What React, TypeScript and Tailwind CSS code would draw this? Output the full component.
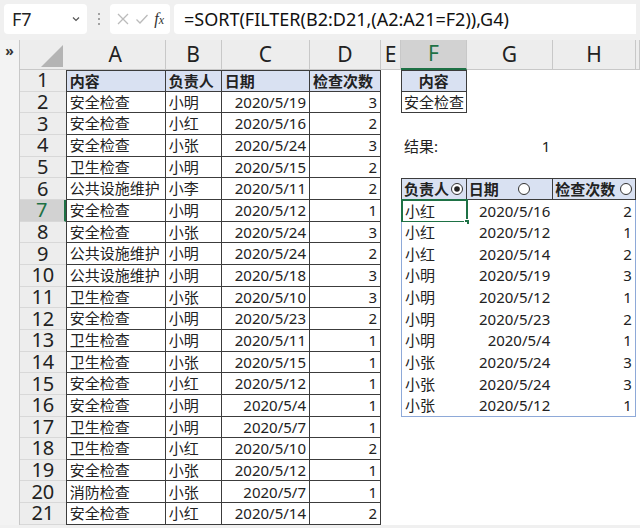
import React from "react";

const FONT = "font-['Noto_Sans','Noto_Sans_CJK_SC',sans-serif]";

const DATA: [string, string, string, number][] = [
  ["安全检查", "小明", "2020/5/19", 3],
  ["安全检查", "小红", "2020/5/16", 2],
  ["安全检查", "小张", "2020/5/24", 3],
  ["卫生检查", "小明", "2020/5/15", 2],
  ["公共设施维护", "小李", "2020/5/11", 2],
  ["安全检查", "小明", "2020/5/12", 1],
  ["安全检查", "小张", "2020/5/24", 3],
  ["公共设施维护", "小明", "2020/5/24", 2],
  ["公共设施维护", "小明", "2020/5/18", 3],
  ["卫生检查", "小张", "2020/5/10", 3],
  ["安全检查", "小明", "2020/5/23", 2],
  ["卫生检查", "小明", "2020/5/11", 1],
  ["卫生检查", "小张", "2020/5/15", 1],
  ["安全检查", "小红", "2020/5/12", 1],
  ["安全检查", "小明", "2020/5/4", 1],
  ["卫生检查", "小明", "2020/5/7", 1],
  ["卫生检查", "小红", "2020/5/10", 2],
  ["安全检查", "小张", "2020/5/12", 1],
  ["消防检查", "小张", "2020/5/7", 1],
  ["安全检查", "小红", "2020/5/14", 2],
];

const RESULT: [string, string, number][] = [
  ["小红", "2020/5/16", 2],
  ["小红", "2020/5/12", 1],
  ["小红", "2020/5/14", 2],
  ["小明", "2020/5/19", 3],
  ["小明", "2020/5/12", 1],
  ["小明", "2020/5/23", 2],
  ["小明", "2020/5/4", 1],
  ["小张", "2020/5/24", 3],
  ["小张", "2020/5/24", 3],
  ["小张", "2020/5/12", 1],
];

const COLS = ["A", "B", "C", "D", "E", "F", "G", "H", ""];

function Radio({ on }: { on?: boolean }) {
  return (
    <svg width="14" height="14" viewBox="0 0 14 14" className="shrink-0">
      <circle cx="7" cy="7" r="5.5" fill="white" stroke="#333" strokeWidth="1" />
      {on && <circle cx="7" cy="7" r="2.8" fill="#222" />}
    </svg>
  );
}

function Toolbar() {
  return (
    <div className="h-[40px] bg-[#f0f0f0] flex items-start pt-[4px] px-[4px] gap-[4px]">
      <div className="w-[83px] h-[30px] bg-white rounded-[4px] flex items-center justify-between pl-[8px] pr-[6px]">
        <span className="text-[18px] text-[#222]">F7</span>
        <svg width="10" height="10" viewBox="0 0 10 10">
          <path d="M2 3.5 L5 6.5 L8 3.5" fill="none" stroke="#555" strokeWidth="1.2" />
        </svg>
      </div>
      <div className="w-[15px] h-[30px] flex items-center justify-center">
        <svg width="4" height="14" viewBox="0 0 4 14">
          <circle cx="2" cy="2" r="1" fill="#888" />
          <circle cx="2" cy="7" r="1" fill="#888" />
          <circle cx="2" cy="12" r="1" fill="#888" />
        </svg>
      </div>
      <div className="w-[60px] h-[30px] bg-white rounded-[4px] flex items-center justify-between px-[6px]">
        <svg width="14" height="14" viewBox="0 0 14 14">
          <path d="M2 2 L12 12 M12 2 L2 12" stroke="#bbb" strokeWidth="1.3" />
        </svg>
        <svg width="14" height="14" viewBox="0 0 14 14">
          <path d="M1.5 7.5 L5 11 L12.5 3" fill="none" stroke="#bbb" strokeWidth="1.3" />
        </svg>
        <span className="font-['Liberation_Serif',serif] italic text-[16px] text-[#333] leading-none">
          f<span className="text-[12px]">x</span>
        </span>
      </div>
      <div className="flex-1 h-[30px] bg-white rounded-l-[4px] flex items-center pl-[10px]">
        <span className="text-[18px] text-[#111]">=SORT(FILTER(B2:D21,(A2:A21=F2)),G4)</span>
      </div>
    </div>
  );
}

export default function App() {
  const cells: React.ReactNode[] = [];

  // header row
  cells.push(
    <div key="corner" className="bg-[#ededed] border-b border-[#c8c8c8] flex items-end justify-end pr-[3px] pb-[2px]">
      <svg width="22" height="22" viewBox="0 0 22 22">
        <path d="M22 0 L22 22 L0 22 Z" fill="#b4b4b4" />
      </svg>
    </div>
  );
  COLS.forEach((c, i) => {
    const sel = c === "F";
    cells.push(
      <div
        key={"h" + i}
        className={
          sel
            ? "bg-[#d2d2d2] border-b-2 border-b-[#1e7145] border-r border-r-[#c8c8c8] flex items-center justify-center text-[21px] text-[#1e7145]"
            : "bg-[#ededed] border-b border-r border-[#c8c8c8] flex items-center justify-center text-[21px] text-[#222]"
        }
      >
        {c}
      </div>
    );
  });

  for (let r = 1; r <= 21; r++) {
    const sel = r === 7;
    cells.push(
      <div
        key={"r" + r}
        className={
          sel
            ? "bg-[#d2d2d2] border-r-2 border-r-[#1e7145] border-b border-b-[#d8d8d8] flex items-center justify-center text-[20px] text-[#1e7145] leading-[18px] overflow-hidden"
            : "bg-[#ededed] border-b border-[#d8d8d8] flex items-center justify-center text-[20px] text-[#222] leading-[18px] overflow-hidden"
        }
      >
        {r}
      </div>
    );

    // A-D
    const row =
      r === 1 ? ["内容", "负责人", "日期", "检查次数"] : DATA[r - 2].map((v) => String(v));
    row.forEach((v, ci) => {
      const head = r === 1;
      const right = !head && ci >= 2;
      let cls =
        "border-r border-b border-[#3c3c3c] flex items-center px-[3px] text-[15px] text-[#222] whitespace-nowrap overflow-hidden";
      if (ci === 0) cls += " border-l";
      if (head) cls += " border-t bg-[#d9e1f2] font-bold";
      else cls += " bg-white";
      if (right) cls += " justify-end";
      cells.push(
        <div key={`c${r}-${ci}`} className={cls}>
          {v}
        </div>
      );
    });

    // E
    cells.push(<div key={`e${r}`} className="bg-white" />);

    // F, G, H
    if (r === 1) {
      cells.push(
        <div key="f1" className="bg-[#d9e1f2] border border-[#3c3c3c] flex items-center justify-center text-[15px] font-bold text-[#222]">
          内容
        </div>
      );
      cells.push(<div key="g1" className="bg-white" />, <div key="hh1" className="bg-white" />);
    } else if (r === 2) {
      cells.push(
        <div key="f2" className="bg-white border-l border-r border-b border-[#3c3c3c] flex items-center px-[2px] text-[15px] text-[#222] whitespace-nowrap">
          安全检查
        </div>
      );
      cells.push(<div key="g2" className="bg-white" />, <div key="hh2" className="bg-white" />);
    } else if (r === 4) {
      cells.push(
        <div key="f4" className="bg-white flex items-center px-[3px] text-[15px] text-[#222] whitespace-nowrap">
          结果:
        </div>
      );
      cells.push(
        <div key="g4" className="bg-white flex items-center justify-end pr-[3px] text-[15px] text-[#222]">
          1
        </div>
      );
      cells.push(<div key="hh4" className="bg-white" />);
    } else if (r === 6) {
      cells.push(
        <div key="f6" className="bg-[#d9e1f2] border border-[#3c3c3c] flex items-center justify-between px-[2px] text-[15px] font-bold text-[#222] whitespace-nowrap">
          负责人
          <Radio on />
        </div>
      );
      cells.push(
        <div key="g6" className="bg-[#d9e1f2] border-t border-b border-r border-[#3c3c3c] flex items-center gap-[18px] px-[2px] text-[15px] font-bold text-[#222] whitespace-nowrap">
          日期
          <Radio />
        </div>
      );
      cells.push(
        <div key="hh6" className="bg-[#d9e1f2] border-t border-b border-r border-[#3c3c3c] flex items-center justify-between px-[2px] text-[15px] font-bold text-[#222] whitespace-nowrap">
          检查次数
          <Radio />
        </div>
      );
    } else if (r >= 7 && r <= 16) {
      const [who, date, n] = RESULT[r - 7];
      const last = r === 16;
      cells.push(
        <div
          key={`f${r}`}
          className={
            (last ? "border-b " : "") +
            "relative bg-white border-l border-[#8ea9d8] flex items-center px-[3px] text-[15px] text-[#222]"
          }
        >
          {who}
          {r === 7 && (
            <div className="absolute inset-[-1px] border-2 border-[#1e7145]">
              <div className="absolute right-[-4px] bottom-[-4px] w-[6px] h-[6px] bg-[#1e7145] border border-white" />
            </div>
          )}
        </div>
      );
      cells.push(
        <div
          key={`g${r}`}
          className={
            (last ? "border-b border-[#8ea9d8] " : "") +
            "bg-white flex items-center justify-end pr-[3px] text-[15px] text-[#222]"
          }
        >
          {date}
        </div>
      );
      cells.push(
        <div
          key={`hh${r}`}
          className={
            (last ? "border-b " : "") +
            "bg-white border-r border-[#8ea9d8] flex items-center justify-end pr-[3px] text-[15px] text-[#222]"
          }
        >
          {n}
        </div>
      );
    } else {
      cells.push(
        <div key={`f${r}`} className="bg-white" />,
        <div key={`g${r}`} className="bg-white" />,
        <div key={`hh${r}`} className="bg-white" />
      );
    }
    // I
    cells.push(<div key={`i${r}`} className="bg-white" />);
  }

  return (
    <div className={`w-[640px] h-[528px] overflow-hidden bg-[#f0f0f0] ${FONT}`}>
      <Toolbar />
      <div className="flex">
        <div className="w-[20px] shrink-0 bg-[#f3f3f3] border-r border-[#c8c8c8] flex justify-center pt-[4px]">
          <span className="text-[14px] font-bold text-[#333] leading-none">»</span>
        </div>
        <div className="grid grid-cols-[45.7px_100px_56px_88.3px_71px_20px_65.7px_86.6px_82.7px_4px] grid-rows-[30px_repeat(21,21.67px)]">
          {cells}
        </div>
      </div>
    </div>
  );
}
